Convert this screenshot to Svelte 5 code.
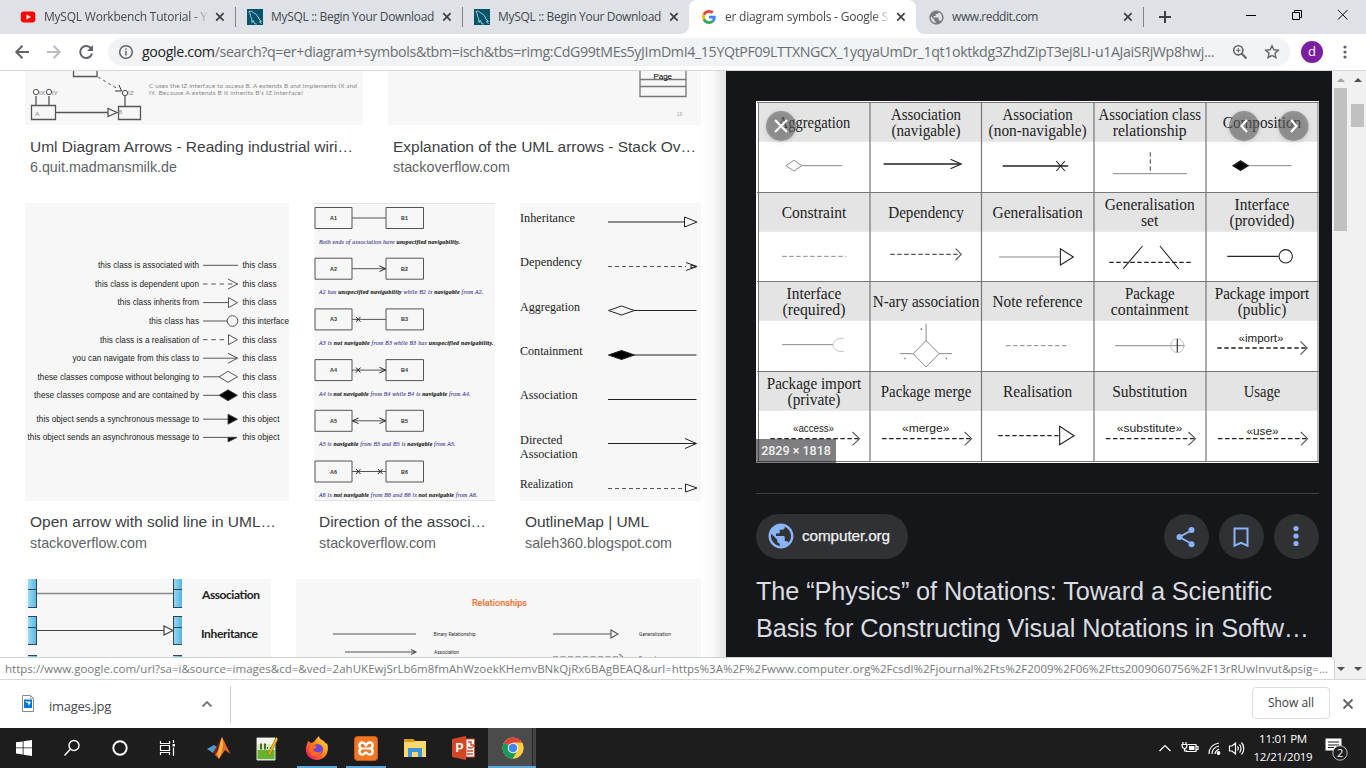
<script>
  // Spreads letter spacing so a label occupies the given width.
  function fit(node, width) {
    const natural = node.getBoundingClientRect().width;
    const count = [...node.textContent].length;
    node.style.letterSpacing = (width - natural) / count + 'px';
  }

  const tabs = [
    { icon: 'youtube', title: 'MySQL Workbench Tutorial - Y', w: 163, divider: true, fade: true },
    { icon: 'mysql', title: 'MySQL :: Begin Your Download', w: 163, divider: true },
    { icon: 'mysql', title: 'MySQL :: Begin Your Download', w: 163 },
    { icon: 'google', title: 'er diagram symbols - Google S', w: 163, active: true, fade: true },
    { icon: 'globe', title: 'www.reddit.com', w: 86, divider: true }
  ];

  const classRows = [
    ['this class is associated with', 98, 265.3, 'this class', 'line'],
    ['this class is dependent upon', 95, 284, 'this class', 'dashopen'],
    ['this class inherits from', 117.5, 302.6, 'this class', 'tri'],
    ['this class has', 149, 321, 'this interface', 'circle'],
    ['this class is a realisation of', 100, 339.7, 'this class', 'dashtri'],
    ['you can navigate from this class to', 72.5, 358.2, 'this class', 'open'],
    ['these classes compose without belonging to', 37.5, 376.8, 'this class', 'diamond'],
    ['these classes compose and are contained by', 34, 395.3, 'this class', 'full'],
    ['this object sends a synchronous message to', 36.5, 419.2, 'this object', 'solid'],
    ['this object sends an asynchronous message to', 27.5, 437.4, 'this object', 'half']
  ];

  const assoc = [
    { n: 1, w: 141, t: [['Both ends of association have ', 0], ['unspecified navigability.', 1]] },
    { n: 2, w: 164.5, r: '>', t: [['A2 has ', 0], ['unspecified navigability', 1], [' while B2 is ', 0], ['navigable', 1], [' from A2.', 0]] },
    { n: 3, w: 174.5, l: 'x', t: [['A3 is ', 0], ['not navigable', 1], [' from B3 while B3 has ', 0], ['unspecified navigability.', 1]] },
    { n: 4, w: 151.5, l: 'x', r: '>', t: [['A4 is ', 0], ['not navigable', 1], [' from B4 while B4 is ', 0], ['navigable', 1], [' from A4.', 0]] },
    { n: 5, w: 136.5, l: '<', r: '>', t: [['A5 is ', 0], ['navigable', 1], [' from B5 and B5 is ', 0], ['navigable', 1], [' from A5.', 0]] },
    { n: 6, w: 158.5, l: 'x', r: 'x', t: [['A6 is ', 0], ['not navigable', 1], [' from B6 and B6 is ', 0], ['not navigable', 1], [' from A6.', 0]] }
  ];

  const outline = [
    ['Inheritance', 55, 221.5], ['Dependency', 62, 266], ['Aggregation', 60, 310.5],
    ['Containment', 62.5, 354.5], ['Association', 57.5, 399], ['Directed', 42.5, 443.5],
    ['Association', 57.5, 457.5], ['Realization', 53, 487.5]
  ];

  const colX = [814, 926, 1037.6, 1149.7, 1262];
  const rowY = [102.3, 192.3, 281.3, 371.3];
  const cells = [
    [[['Aggregation', 72.5]], [['Association', 70], ['(navigable)', 69]], [['Association', 70], ['(non-navigable)', 98]], [['Association class', 102.5], ['relationship', 74]], [['Composition', 78.4]]],
    [[['Constraint', 64.7]], [['Dependency', 75.5]], [['Generalisation', 90]], [['Generalisation', 90], ['set', 17.5]], [['Interface', 54.8], ['(provided)', 65]]],
    [[['Interface', 54.8], ['(required)', 63]], [['N-ary association', 106.5]], [['Note reference', 90]], [['Package', 49.6], ['containment', 77.7]], [['Package import', 94.5], ['(public)', 48.5]]],
    [[['Package import', 94.5], ['(private)', 53]], [['Package merge', 90.6]], [['Realisation', 69]], [['Substitution', 75]], [['Usage', 36.5]]]
  ];
  const stereo = [['«import»', 1261, 341.5, 45], ['«access»', 813.5, 432, 41], ['«merge»', 925.7, 432, 47.5], ['«substitute»', 1149.5, 432, 65.5], ['«use»', 1262.5, 434.5, 32]];
</script>

{#snippet globe()}
  <path d="M12 2C6.5 2 2 6.5 2 12s4.500 10 10 10 10-4.500 10-10S17.500 2 12 2zm-1 17.900c-3.900-.5-7-3.900-7-7.900 0-.6.100-1.200.2-1.800L9 15v1c0 1.100.9 2 2 2v1.900zm6.900-2.500c-.3-.8-1-1.400-1.900-1.400h-1v-3c0-.6-.4-1-1-1H8v-2h2c.6 0 1-.4 1-1V7h2c1.100 0 2-.9 2-2v-.4c2.900 1.200 5 4.100 5 7.400 0 2.100-.8 4-2.100 5.400z" />
{/snippet}

<div class="screen">
  <header class="strip">
    {#each tabs as tab}
      <div class="tab" class:active={tab.active} class:divider={tab.divider}>
        <span class="fav">
          {#if tab.icon === 'youtube'}
            <svg width="16" height="16"><rect x=".8" y="2.600" width="14.500" height="11" rx="3" fill="#f00" /><path d="M6.500 5.400v5L11 8z" fill="#fff" /></svg>
          {:else if tab.icon === 'mysql'}
            <svg width="16" height="16"><rect width="16" height="16" fill="#00546b" /><path d="M2 2.500c2-.7 3.300 0 4.600 1.300C9.500 5.300 11 7 12 10l2.500 2.500-2 .3 2 2M2 2.500c0 1 .5 1.500 1.200 2.200 0 2 .6 3.500 1.500 5l.3 3.800 1.300-2 1.400 3.200 2 .4" fill="none" stroke="#c9dbe2" stroke-width=".9" /></svg>
          {:else if tab.icon === 'google'}
            <svg width="14" height="14" viewBox="0 0 48 48"><path fill="#ea4335" d="M24 9.500c3.500 0 6.700 1.200 9.200 3.600l6.900-6.900C35.900 2.400 30.500 0 24 0 14.600 0 6.500 5.400 2.600 13.200l8 6.200C12.400 13.700 17.700 9.500 24 9.500z" /><path fill="#4285f4" d="M47 24.600c0-1.600-.2-3.100-.4-4.600H24v9h12.900c-.6 3-2.300 5.500-4.800 7.200l7.700 6C44.400 38 47 31.800 47 24.600z" /><path fill="#fbbc05" d="M10.500 28.600A14.500 14.500 0 0 1 10.500 19.400l-8-6.200a24 24 0 0 0 0 21.600z" /><path fill="#34a853" d="M24 48c6.500 0 11.900-2.100 15.900-5.800l-7.700-6c-2.200 1.500-4.900 2.300-8.200 2.300-6.300 0-11.600-4.200-13.500-9.900l-8 6.200C6.500 42.600 14.600 48 24 48z" /></svg>
          {:else}
            <svg width="17" height="17" viewBox="0 0 24 24" fill="#777a7e">{@render globe()}</svg>
          {/if}
        </span>
        <span class="title" class:fade={tab.fade}><span use:fit={tab.w}>{tab.title}</span></span>
        <svg class="x" width="10" height="10"><path d="M1.200 1.200l7.400 7.400M8.600 1.200L1.200 8.600" stroke="#3c4043" stroke-width="1.700" /></svg>
      </div>
    {/each}
    <svg class="plus" width="14" height="14"><path d="M7 1v12M1 7h12" stroke="#3c4043" stroke-width="2" /></svg>
    <svg class="win" width="104" height="12"><path d="M1 6.500h10M47.500 3.500h7v7h-7zM49.500 3.500v-2h7v7h-2M93 1l9.500 9.500M102.500 1L93 10.500" fill="none" stroke="#000" /></svg>
  </header>

  <div class="toolbar">
    <svg class="nav" width="86" height="20" fill="none" stroke-width="2"><path d="M15 10H2.500M8.500 3.800L2.300 10l6.200 6.200" stroke="#5f6368" /><path d="M33 10h12.500M39.500 3.800l6.200 6.200-6.200 6.200" stroke="#babcbe" /><path d="M77 6.400A6 6 0 1 0 78 11.500" stroke="#5f6368" /><path d="M79 3v6h-6z" fill="#5f6368" stroke="none" /></svg>
    <div class="omni">
      <svg width="16" height="16"><circle cx="8" cy="8" r="6.300" fill="none" stroke="#5f6368" stroke-width="1.500" /><path d="M8 7v4.500M8 4.200v1.600" stroke="#5f6368" stroke-width="1.500" /></svg>
      <span class="url"><span use:fit={1072}><b>google.com</b>/search?q=er+diagram+symbols&amp;tbm=isch&amp;tbs=rimg:CdG99tMEs5yJImDmI4_15YQtPF09LTTXNGCX_1yqyaUmDr_1qt1oktkdg3ZhdZipT3ej8LI-u1AJaiSRjWp8hwj...</span></span>
      <svg class="mag" width="16" height="16" fill="none" stroke="#5f6368"><circle cx="6.300" cy="6.300" r="4.600" stroke-width="1.600" /><path d="M9.800 9.800l4.700 4.700" stroke-width="2" /><path d="M6.300 4v4.600M4 6.300h4.600" /></svg>
      <svg width="16" height="16"><path d="M8 1.800l1.900 4 4.400.5-3.300 3 .9 4.400L8 11.500l-3.900 2.200.9-4.400-3.300-3 4.400-.5z" fill="none" stroke="#5f6368" stroke-width="1.400" /></svg>
    </div>
    <span class="avatar">d</span>
    <svg class="kebab" width="4" height="16" fill="#5f6368"><circle cx="2" cy="3" r="1.600" /><circle cx="2" cy="8" r="1.600" /><circle cx="2" cy="13" r="1.600" /></svg>
  </div>

  <main>
    <section class="results">
      <div class="row first">
        <article>
          <svg class="thumb" width="338" height="54" viewBox="25 71 338 54" fill="none" stroke="#555">
            <path d="M73.500 71v5.500h23.500V71M36 96v10M49 96v10M31.500 105.500h24v14h-24zM55 112.500h53M108 108.500v8l9-4zM118.500 106.500h22v13h-22zM125 96v11" stroke-width="1.300" />
            <circle cx="36" cy="92" r="2.700" /><circle cx="49" cy="92" r="2.700" /><circle cx="125" cy="93" r="2.700" />
            <path d="M98 77l20 12" stroke-dasharray="3 3" /><path d="M115 91l6.500 0-2.500-6" stroke="#333" />
            <g class="tiny" fill="#888" stroke="none"><text x="39" y="95">IX</text><text x="52" y="95">IY</text><text x="128" y="95">IZ</text><text x="35" y="116">A</text><text x="118" y="114">B</text>
              <text x="149" y="88" textLength="208">C uses the IZ interface to access B. A extends B and implements IX and</text>
              <text x="149" y="94.500" textLength="154">IY. Because A extends B it inherits B's IZ interface!</text></g>
          </svg>
          <h3><span use:fit={323}>Uml Diagram Arrows - Reading industrial wiri…</span></h3>
          <p><span use:fit={147}>6.quit.madmansmilk.de</span></p>
        </article>
        <article>
          <svg class="thumb" width="313" height="54" viewBox="388 71 313 54">
            <path d="M640 71v25.500h46V71M640 79.500h46M640 86.500h46" fill="none" stroke="#777" stroke-width="1.300" />
            <text x="653.500" y="79" class="sans" font-size="8" textLength="18.500">Page</text><text x="676.500" y="116" class="sans" font-size="5.500" fill="#aaa">16</text>
          </svg>
          <h3><span use:fit={303}>Explanation of the UML arrows - Stack Ov…</span></h3>
          <p><span use:fit={117}>stackoverflow.com</span></p>
        </article>
      </div>

      <div class="row second">
        <article>
          <svg class="thumb" width="264" height="298" viewBox="25 203 264 298">
            {#each classRows as [left, x, y, right, kind]}
              <g class="sans" font-size="8.200" fill="#222"><text {x} y={y + 2.800} textLength={199 - x}>{left}</text><text x="242.500" y={y + 2.800} textLength={kind === 'circle' ? 46.500 : right === 'this object' ? 37 : 34}>{right}</text></g>
              <g transform="translate(0 {y})" fill="none" stroke="#444" stroke-width=".9">
                {#if kind === 'line'}<path d="M203 0h35" />
                {:else if kind === 'dashopen'}<path d="M203 0h35" stroke-dasharray="4.500 3.800" /><path d="M228-5l9.500 5-9.500 5" />
                {:else if kind === 'tri'}<path d="M203 0h25M228.500-5v10l9-5z" />
                {:else if kind === 'circle'}<path d="M203 0h24" /><circle cx="232.500" cy="0" r="5.300" />
                {:else if kind === 'dashtri'}<path d="M203 0h24" stroke-dasharray="4.500 3.800" /><path d="M228.500-5v10l9-5z" />
                {:else if kind === 'open'}<path d="M203 0h34.500M228-5l9.500 5-9.500 5" />
                {:else if kind === 'diamond'}<path d="M203 0h16l9-5.500 9.500 5.500-9.500 5.500-9-5.500" />
                {:else if kind === 'full'}<path d="M203 0h16" /><path d="M219 0l9-5.500 9.500 5.500-9.500 5.500z" fill="#000" />
                {:else if kind === 'solid'}<path d="M203 0h25" /><path d="M228-5v10l9.500-5z" fill="#000" />
                {:else}<path d="M203 0h34" /><path d="M228 0v4.500l9-4.500z" fill="#000" />{/if}
              </g>
            {/each}
          </svg>
          <h3><span use:fit={246}>Open arrow with solid line in UML…</span></h3>
          <p><span use:fit={117}>stackoverflow.com</span></p>
        </article>
        <article>
          <svg class="thumb" width="181" height="298" viewBox="314 203 181 298">
            <path d="M314 203.500h181M314 500.500h181" stroke="#e4e4e4" />
            {#each assoc as a, i}
              <g transform="translate(0 {218 + i * 50.700})">
                <path d="M315-10.500h37v21h-37zM386-10.500h37.500v21H386zM352 0h34" fill="none" stroke="#555" />
                {#if a.l === 'x'}<path d="M356-2.500l4.500 5M360.500-2.500l-4.500 5" stroke="#222" />{/if}
                {#if a.l === '<'}<path d="M358.500-2.800L352.500 0l6 2.800" fill="none" stroke="#222" />{/if}
                {#if a.r === '>'}<path d="M379.500-2.800l6 2.800-6 2.800" fill="none" stroke="#222" />{/if}
                {#if a.r === 'x'}<path d="M378-2.500l4.500 5M382.500-2.500l-4.500 5" stroke="#222" />{/if}
                <g class="sans" font-size="5.400" font-weight="bold" fill="#333"><text x="330" y="2">A{a.n}</text><text x="401" y="2">B{a.n}</text></g>
                <text class="caption" x="319" y="25.500" textLength={a.w}>{#each a.t as [s, bold]}<tspan class:strong={bold}>{s}</tspan>{/each}</text>
              </g>
            {/each}
          </svg>
          <h3><span use:fit={167}>Direction of the associ…</span></h3>
          <p><span use:fit={117}>stackoverflow.com</span></p>
        </article>
        <article>
          <svg class="thumb" width="181" height="298" viewBox="520 203 181 298">
            <g class="serif" font-size="13" fill="#222">{#each outline as [t, w, y]}<text x="520" {y} textLength={w} lengthAdjust="spacingAndGlyphs">{t}</text>{/each}</g>
            <g fill="none" stroke="#222">
              <path d="M608 222h76.500M684.500 217v10l12.500-5z" />
              <path d="M608 266.500h78" stroke-dasharray="4 3" stroke="#555" /><path d="M686 262.500l11 4-11 4M691 265l5 1.500-5 1.500z" />
              <path d="M608.500 310.500l13-4.500 13 4.500-13 4.500zM634 310.500h62.500M634 355h62.500M608 399.500h88.500M608 443.500h88M685 438.500l11.500 5-11.500 5" />
              <path d="M608.500 355l13-4.500 13 4.500-13 4.500z" fill="#000" />
              <path d="M608 488.500h77" stroke-dasharray="4 3" stroke="#555" /><path d="M685.500 484v8l11.500-4z" />
            </g>
          </svg>
          <h3><span use:fit={124}>OutlineMap | UML</span></h3>
          <p><span use:fit={147}>saleh360.blogspot.com</span></p>
        </article>
      </div>

      <div class="row third">
        <svg class="thumb" width="246" height="100" viewBox="25 579 246 100">
          <defs><linearGradient id="bar"><stop offset="0" stop-color="#9bdcf6" /><stop offset="1" stop-color="#56b4dd" /></linearGradient></defs>
          {#each [28, 173] as x}
            <path d="M{x} 577h9v30h-9zM{x} 616h9v28.500h-9zM{x} 655h9v28h-9z" fill="url(#bar)" />
            <path d="M{x} 607.500h9M{x} 589.500h9M{x} 616.500h9M{x} 644.500h9M{x} 627.500h9M{x} 655.500h9M{x + (x === 28 ? 8.500 : .5)} 579v28M{x + (x === 28 ? 8.500 : .5)} 616v28" stroke="#345" />
          {/each}
          <path d="M37 593.500h136" stroke="#888" stroke-width="1.300" /><path d="M37 630.500h127M164 626v9l9-4.500z" stroke="#444" fill="none" stroke-width="1.200" />
          <g class="jost" font-size="12" fill="#222"><text x="202" y="598.500" textLength="58">Association</text><text x="201" y="637.500" textLength="57">Inheritance</text></g>
        </svg>
        <svg class="thumb" width="405" height="100" viewBox="296 579 405 100">
          <text class="rob" x="472" y="606" font-size="9" fill="#f26522" stroke="#f26522" stroke-width=".2" textLength="55">Relationships</text>
          <path d="M333 634h83M553 634h58M345 652h70M411 649.500l5 2.500-5 2.500M611 630v8l7-4z" fill="none" stroke="#555" stroke-width="1.100" />
          <path d="M553 657h68" stroke="#555" stroke-dasharray="5 2.500" /><path d="M619 654l4 3" stroke="#555" />
          <g class="rob" font-size="5" fill="#333"><text x="433.500" y="635.500" textLength="42">Binary Relationship</text><text x="639" y="636" textLength="32">Generalization</text><text x="434" y="653.500" textLength="25">Association</text><text x="639" y="660" textLength="27">Dependency</text></g>
        </svg>
      </div>
    </section>

    <aside class="detail">
      <div class="figure">
        <svg width="563" height="362" viewBox="756 101 563 362">
          <rect x="756" y="101" width="563" height="362" fill="#fff" />
          {#each rowY as y}<rect x="758" {y} width="560" height="39.500" fill="#e4e4e4" />{/each}
          <path d="M757 102.500h562M757 192.500h562M757 281.500h562M757 371.500h562M757 461.500h562M758.500 102v360M1318 102v360" stroke="#777" />
          <path d="M870 102v360M981.500 102v360M1094 102v360M1206 102v360" stroke="#777" stroke-width="1.200" />
          <g class="serif" font-size="16.200" fill="#222" text-anchor="middle">
            {#each cells as row, r}{#each row as lines, c}{#each lines as [t, w], i}
              <text x={colX[c]} y={rowY[r] + (lines.length === 1 ? 25.200 : 17.200 + i * 16)} textLength={w} lengthAdjust="spacingAndGlyphs">{t}</text>
            {/each}{/each}{/each}
          </g>
          <g class="sans" font-size="11.500" fill="#222" text-anchor="middle">{#each stereo as [t, x, y, w]}<text {x} {y} textLength={w} lengthAdjust="spacingAndGlyphs">{t}</text>{/each}</g>
          <g class="symbols" transform="translate(750 95) scale(.36996 .33333)" fill="none">
            <path class="pale" d="M97 212l22-16 21 16-21 16zM140 212h109M981 236h200M1346 212h118M673 486h164M987 752h188M476 686v51M405 776h36M511 776h35M441 776l35-39 35 39-35 40zM87 749h137" />
            <path class="thick" d="M361 207h208M683 213h177" />
            <path d="M542 193l29 14-29 14M828 198l23 30M851 198l-23 30M1306 212l20-14 20 14-20 14zM839 461v49l35-24zM1009 521l52-68M1108 453l51 69M1290 484h139M837 994v55l39-27zM1155 731v42" />
            <path d="M1306 212l20-14 20 14-20 14z" fill="#000" />
            <ellipse cx="1448" cy="484" rx="18" ry="20" /><ellipse class="faint" cx="1155" cy="752" rx="18" ry="21" /><path class="faint" d="M253 730c-38-4-38 44 0 39" />
            <path class="dash mid" d="M1082 172v64M379 478h190" /><path class="dash" d="M971 502h224" />
            <path class="dash pale" d="M87 484h173M692 752h172" />
            <path class="dash thick" d="M1263 759h240M55 1031h241M357 1031h241M671 1022h163M962 1031h241M1265 1031h241" />
            <path class="mid" d="M556 461l15 17-15 17M1488 739l18 20-18 20M277 1011l19 20-19 20M580 1011l19 20-19 20M1185 1011l19 20-19 20M1489 1011l18 20-18 20M463 700v5M419 788v5M531 788v5" />
          </g>
          <g class="controls"><circle cx="781" cy="126" r="15" /><circle cx="1244" cy="126" r="15" /><circle cx="1293.500" cy="126" r="15" /></g>
          <path d="M775 120l12 12M787 120l-12 12M1247 120l-5.500 6 5.500 6M1291 120l5.500 6-5.500 6" fill="none" stroke="#fff" stroke-width="2.200" />
        </svg>
        <span class="dims">2829 × 1818</span>
      </div>
      <hr />
      <div class="actions">
        <div class="site"><svg width="30" height="30" viewBox="0 0 24 24" fill="#8ab4f8">{@render globe()}</svg><span use:fit={88}>computer.org</span></div>
        <button aria-label="Share"><svg width="24" height="24" fill="#8ab4f8"><path d="M18 5L5.500 12 18 19" fill="none" stroke="#8ab4f8" stroke-width="2" /><circle cx="17.500" cy="5" r="3" /><circle cx="5.500" cy="12" r="3" /><circle cx="17.500" cy="19.300" r="3" /></svg></button>
        <button aria-label="Save"><svg width="24" height="24"><path d="M5.500 3.500h13v17.200L12 17.800l-6.500 2.900z" fill="none" stroke="#8ab4f8" stroke-width="2" /></svg></button>
        <button aria-label="More"><svg width="24" height="24" fill="#8ab4f8"><circle cx="12" cy="3.500" r="2.600" /><circle cx="12" cy="11" r="2.600" /><circle cx="12" cy="18.500" r="2.600" /></svg></button>
      </div>
      <h2><span use:fit={516}>The “Physics” of Notations: Toward a Scientific</span><br /><span use:fit={553}>Basis for Constructing Visual Notations in Softw…</span></h2>
    </aside>

    <div class="scroll inner"><i class="up"></i><b></b><i class="down"></i></div>
    <div class="scroll outer"><i class="up"></i><b></b><i class="down"></i></div>
    <div class="status"><span use:fit={1323}>https://www.google.com/url?sa=i&amp;source=images&amp;cd=&amp;ved=2ahUKEwjSrLb6m8fmAhWzoekKHemvBNkQjRx6BAgBEAQ&amp;url=https%3A%2F%2Fwww.computer.org%2Fcsdl%2Fjournal%2Fts%2F2009%2F06%2Ftts2009060756%2F13rRUwInvut&amp;psig=...</span></div>
  </main>

  <div class="downloads">
    <div class="file">
      <svg class="doc" width="12" height="17"><path d="M.5.5h8l3 3v13H.5z" fill="#fff" stroke="#888" /><path d="M8.500.5v3h3" fill="none" stroke="#aaa" /><rect x="2" y="4.500" width="8" height="8.500" fill="#0078d7" /><path d="M3 7l1.500-1 1 1L7 6l2 1.500L8 8l-1 3-1-3z" fill="#fff" /></svg>
      <span class="name"><span use:fit={62}>images.jpg</span></span>
      <svg class="chev" width="12" height="8"><path d="M1.500 6.500L6 2l4.500 4.500" fill="none" stroke="#777" stroke-width="1.800" /></svg>
    </div>
    <div class="show"><span use:fit={46}>Show all</span></div>
    <svg width="12" height="12"><path d="M1.500 1.500l9 9M10.500 1.500l-9 9" stroke="#5f6368" stroke-width="1.800" /></svg>
  </div>

  <footer>
    <div class="sys">
      <span><svg width="16" height="16" fill="#fff"><path d="M0 2.300L6.700 1.400V7.500H0zM7.500 1.300L16 0v7.500H7.500zM0 8.300h6.700v6.200L0 13.600zM7.500 8.300H16V16l-8.500-1.200z" /></svg></span>
      <span><svg width="18" height="18" fill="none" stroke="#fff" stroke-width="1.400"><circle cx="11" cy="6.500" r="5" /><path d="M7.300 10.200L1.500 16.500" /></svg></span>
      <span><svg width="18" height="18"><circle cx="9" cy="9" r="6.700" fill="none" stroke="#fff" stroke-width="1.900" /></svg></span>
      <span><svg width="18" height="18" fill="none" stroke="#fff" stroke-width="1.200"><path d="M1.500 2v2.500h9V2M1.500 16v-2.500h9V16M1.500 6.500h9v5h-9zM14.500 1v3M14.500 8.500V17" /><path d="M13.500 5h2.500v2.500h-2.500z" fill="#fff" stroke="none" /></svg></span>
    </div>
    <div class="apps">
      <span><svg width="24" height="24"><path d="M0 13l7-4 3 2-4 6z" fill="#4c9ad4" /><path d="M6 17L15 1l-5 13-2 5z" fill="#8d1d13" /><path d="M15 1c3 5 5 11 8.500 17L18 14l-6 9-4-4c4-5 4-12 7-18z" fill="#e36a20" /><path d="M15 1c2 7 1 12-3 22-1-3-1-4-2-5 3-5 3-11 5-17z" fill="#ffb347" /></svg></span>
      <span><svg width="23" height="25"><path d="M1 2h18v22H1z" fill="#d5eeb0" stroke="#ddd" /><path d="M1 2h18v6H1z" fill="#f4f4ee" /><path d="M1.500 14h17v9h-17z" fill="#64b52d" /><path d="M5 7.500v6M9 7.500v6M11 12h1M14 12h1" stroke="#222" stroke-width="1.400" /><path d="M20 1l2 2-8 16-2 1 .5-3z" fill="#f5b91a" stroke="#775a10" stroke-width=".5" /></svg></span>
      <span class="open"><svg width="24" height="25"><defs><linearGradient id="fox" x1="1" y1="0" x2="0" y2="1"><stop offset="0" stop-color="#fff04a" /><stop offset=".45" stop-color="#ff8a16" /><stop offset="1" stop-color="#e5007a" /></linearGradient></defs><path d="M3 5l3 2 3-1c1-2 3-4 5-6 0 4 6 4 7 8l1-1c3 9-2 17-10 17C4 24 0 18 1 11z" fill="url(#fox)" /><circle cx="12.500" cy="13.500" r="5.500" fill="#6a45d8" /><path d="M5 8c4 1 6 1 7 4l-4 1c1 4 6 4 9 2-3 7-12 6-13-1z" fill="#ff6a1d" /></svg></span>
      <span class="open"><svg width="24" height="25"><rect x=".5" y=".5" width="23" height="24" rx="3" fill="#f37623" stroke="#c65c14" /><path d="M8.500 6.500c2 0 2.500 2 3.500 3 1-1 1.500-3 3.500-3 4 0 4 5 1 6 3 1 3 6-1 6-2 0-2.500-2-3.500-2s-1.500 2-3.500 2c-4 0-4-5-1-6-3-1-3-6 1-6z" fill="none" stroke="#fff" stroke-width="2.400" /><path d="M9 12.500h6" stroke="#fff" stroke-width="2" /></svg></span>
      <span><svg width="22" height="22"><path d="M0 2h9l2 2h11v16H0z" fill="#ffd76a" /><path d="M0 2h9l2 3H0z" fill="#d89b1d" /><path d="M4 20v-9h14v9h-4v-5H8v5z" fill="#3a96dd" /></svg></span>
      <span><svg width="23" height="24"><path d="M0 3L14 0v24L0 21z" fill="#d24726" /><path d="M14 3h8.500v18H14z" fill="#fff" stroke="#d24726" /><path d="M16 6h3v3h3c0 3-4 4-6 2M15 15h6M15 18h6" stroke="#d24726" fill="none" stroke-width="1.400" /><text x="3.500" y="16" class="sans" font-size="12" font-weight="bold" fill="#fff">P</text></svg></span>
      <span class="current"><svg width="22" height="22" viewBox="0 0 48 48"><circle cx="24" cy="24" r="23" fill="#ffcd40" /><path d="M24 24L4.100 12.500A23 23 0 0 1 43.900 12.500H24z" fill="#db4437" /><path d="M4.100 12.500A23 23 0 0 0 24 47l10-17.300L24 24z" fill="#0f9d58" /><path d="M24 12.500h19.900A23 23 0 0 1 24 47l10-17.300z" fill="#ffcd40" /><circle cx="24" cy="24" r="11.500" fill="#f1f1f1" /><circle cx="24" cy="24" r="9.200" fill="#4285f4" /></svg></span>
    </div>
    <div class="tray">
      <svg width="88" height="20" fill="none" stroke="#fff" stroke-width="1.200">
        <path d="M1.500 13L7 7.500l5.500 5.500" />
        <path d="M30 6.500h8v7h-10v-2M38.500 8.500H40v3h-1.500" /><path d="M31 8h5.500v4H31z" fill="#fff" stroke="none" /><path d="M25 4v2M28 4v2M24 6.500h5c0 3-1 4-2.500 4S24 9.500 24 6.500zM26.500 10.500v3" />
        <path d="M51 16c0-6 4-10 10-11M54 16c0-4 3-7 7-8M57 16c0-2 2-4 4-5" /><circle cx="60.500" cy="15" r="1.300" fill="#fff" />
        <path d="M71.500 8H74l3.500-3v11L74 13h-2.500zM79.500 8.500c1 1 1 3 0 4M81.500 6.500c2 2 2 6 0 8M83.500 4.500c3 3 3 9 0 12" />
      </svg>
      <div class="clock"><span use:fit={48}>11:01 PM</span><span use:fit={59}>12/21/2019</span></div>
      <svg class="note" width="26" height="26"><path d="M1.500 3.500h16v12h-5L9.500 19v-3.500h-8z" fill="#fff" /><path d="M4 7h11M4 10h11M4 12.500h6" stroke="#1d1d1d" /><circle cx="16" cy="18" r="7.200" fill="#1f1f1f" stroke="#bbb" /><text x="13" y="22" class="noto" font-size="11" fill="#fff">2</text></svg>
    </div>
  </footer>
</div>

<style>
  :global(body) { margin: 0; overflow: hidden; }
  * { box-sizing: border-box; }
  .screen { width: 1366px; height: 768px; display: flex; flex-direction: column; background: #fff; font-family: "Open Sans", "Noto Sans", sans-serif; overflow: hidden; }
  svg { display: block; flex: none; }
  span { white-space: pre; }
  span span, .site span, h2 span { display: inline-block; }

  .strip { height: 34px; background: #dee1e6; display: flex; align-items: center; padding-left: 8px; flex: none; }
  .tab { position: relative; width: 227px; height: 34px; padding: 0 10px 0 12px; display: flex; align-items: center; }
  .tab.active { background: #fff; border-radius: 8px 8px 0 0; }
  .tab.active::before, .tab.active::after { content: ""; position: absolute; bottom: 0; width: 8px; height: 8px; }
  .tab.active::before { left: -8px; background: radial-gradient(circle at 0 0, transparent 7.5px, #fff 8px); }
  .tab.active::after { right: -8px; background: radial-gradient(circle at 100% 0, transparent 7.5px, #fff 8px); }
  .divider::after { content: ""; position: absolute; right: -1px; top: 7px; width: 1px; height: 20px; background: #808387; }
  .fav { width: 16px; display: flex; justify-content: center; }
  .title { width: 166px; margin-left: 8px; overflow: hidden; font-size: 12px; line-height: 20px; color: #45494d; }
  .fade { -webkit-mask-image: linear-gradient(90deg, #000 148px, transparent 166px); }
  .x { margin-left: auto; }
  .plus { margin-left: 15px; }
  .win { margin: -5px 17px 0 auto; }

  .toolbar { height: 37px; border-bottom: 1px solid #d5d7da; display: flex; align-items: center; padding: 0 19px 0 14px; flex: none; }
  .nav { margin-right: 8px; }
  .omni { width: 1182px; height: 28px; border-radius: 14px; background: #f1f3f4; display: flex; align-items: center; padding: 0 10px; gap: 8px; }
  .url { flex: 1; font-size: 14.200px; line-height: 24px; color: #6a6e73; }
  .url b { font-weight: 400; color: #202124; }
  .mag { margin-right: 8px; }
  .avatar { width: 22px; height: 22px; border-radius: 50%; background: #7b1fa2; color: #fff; font-size: 13px; line-height: 21px; text-align: center; margin-left: 11px; }
  .kebab { margin-left: auto; }

  main { height: 608px; flex: none; display: flex; position: relative; overflow: hidden; }
  .results { width: 726px; height: 608px; padding-left: 25px; overflow: hidden; background: linear-gradient(90deg, transparent 700px, #f9f9f9 713px, #e3e3e3 726px); font-family: "Liberation Sans", Arial, sans-serif; }
  .row { display: flex; gap: 25px; }
  .first { height: 132px; }
  .second { height: 376px; }
  .thumb { background: #f7f7f7; }
  h3, p { font-weight: 400; margin: 0 0 0 5px; }
  h3 { font-size: 15.500px; line-height: 21px; padding-top: 10px; color: #3c4043; }
  .first h3 { padding-top: 11px; }
  p { font-size: 14.300px; line-height: 21px; color: #5f6368; }
  .second p { padding-top: 1px; }
  .sans { font-family: "Liberation Sans", Arial, sans-serif; }
  .serif { font-family: "Liberation Serif", serif; }
  .tiny { font: 6.500px "Lato", sans-serif; }
  .noto { font-family: "Open Sans", sans-serif; }
  .rob { font-family: Roboto, sans-serif; }
  .jost { font-family: Lato, sans-serif; font-weight: 700; }
  .caption { font: italic 5.800px "Liberation Serif", serif; fill: #4e4a9b; white-space: pre; stroke: #4e4a9b; stroke-width: .15; }
  .strong { font-weight: 700; fill: #222; stroke: #222; }

  .detail { width: 606px; height: 608px; background: #15161a; padding: 30px 13px 0 30px; font-family: "Liberation Sans", Arial, sans-serif; }
  .figure { position: relative; height: 362px; }
  .dims { position: absolute; left: 0; bottom: 0; width: 80px; height: 24px; background: rgba(32, 33, 36, .58); color: #f1f1f1; font: 500 12.500px/23px Roboto, sans-serif; text-align: center; }
  .symbols path, .symbols ellipse { vector-effect: non-scaling-stroke; stroke: #222; stroke-width: 1.100; }
  .symbols .pale { stroke: #888; stroke-width: 1; }
  .symbols .faint { stroke: #bbb; stroke-width: .9; }
  .symbols .mid { stroke: #555; }
  .symbols .thick { stroke-width: 1.400; }
  .symbols .dash { stroke-dasharray: 4.500 2.500; }
  .controls { fill: rgba(100, 100, 100, .58); filter: drop-shadow(0 1px 2px rgba(0, 0, 0, .25)); }
  hr { margin: 30px 0 20px; border: 0; height: 1px; background: #3c4043; }
  .actions { display: flex; gap: 10px; height: 45px; }
  .site { width: 152px; height: 45px; border-radius: 23px; background: #303134; color: #f1f3f4; display: flex; align-items: center; gap: 6px; padding: 0 0 2px 10px; font-size: 15.300px; margin-right: auto; -webkit-text-stroke: .25px #f1f3f4; }
  button { width: 45px; height: 45px; padding: 0 1px 0 0; border: 0; border-radius: 50%; background: #303134; display: grid; place-items: center; }
  h2 { margin: 14px 0 0; color: #dadce0; font-weight: 400; font-size: 25.300px; line-height: 37px; white-space: nowrap; }

  .scroll { width: 17px; height: 608px; background: #f1f1f1; display: flex; flex-direction: column; align-items: center; }
  .scroll b { width: 13px; background: #c1c1c1; }
  .inner b { height: 143px; margin-top: 6px; }
  .outer b { height: 23px; margin-top: 22px; }
  .scroll i { width: 0; height: 0; border: 4px solid transparent; }
  .up { margin-top: 3px; border-bottom-color: #505050 !important; }
  .inner .up { border-bottom-color: #a3a3a3 !important; }
  .down { margin: auto 0 4px; border-top-color: #505050 !important; }
  .status { position: absolute; left: 0; bottom: 0; width: 1335px; height: 22px; background: #fff; border: 1px solid #d0d2d5; border-width: 1px 1px 0 0; border-radius: 0 4px 0 0; padding-left: 5px; font-size: 11.500px; line-height: 21px; color: #75787c; }
  .status span { display: inline-block; }

  .downloads { height: 49px; border-top: 1px solid #d5d7da; flex: none; display: flex; align-items: center; padding-right: 12px; }
  .file { width: 231px; height: 37px; border-right: 1px solid #d0d0d0; display: flex; align-items: center; padding-left: 22px; }
  .doc { margin-top: -2px; }
  .name { font-size: 13px; color: #45494d; margin: 4px 0 0 15px; }
  .chev { margin-left: 90px; }
  .show { margin: -2px 12px 0 auto; width: 78px; height: 32px; border: 1px solid #dadce0; border-radius: 4px; text-align: center; font-size: 12px; line-height: 29px; color: #3c4043; }
  .show span { display: inline-block; }

  footer { height: 40px; flex: none; background: #1d1d1d; display: flex; color: #fff; }
  .sys, .apps { display: flex; }
  .sys span { width: 48px; display: grid; place-items: center; }
  .apps { margin-left: 2px; }
  .apps span { width: 49px; height: 40px; display: grid; place-items: center; }
  .open { background: linear-gradient(#5ba7dc, #5ba7dc) 50% 100% / 40px 2px no-repeat; }
  .apps .current { width: 50px; background: linear-gradient(#5ba7dc, #5ba7dc) 0 100% / 48px 2px no-repeat, linear-gradient(90deg, #4b4b4b 44px, #252525 44px, #252525 45px, #444 45px, #444 48px, transparent 48px); }
  .tray { margin-left: auto; display: flex; align-items: center; padding-right: 16px; }
  .clock { width: 62px; margin: -1px 10px 0 6px; display: flex; flex-direction: column; align-items: center; font-size: 11.500px; line-height: 18px; }
</style>
